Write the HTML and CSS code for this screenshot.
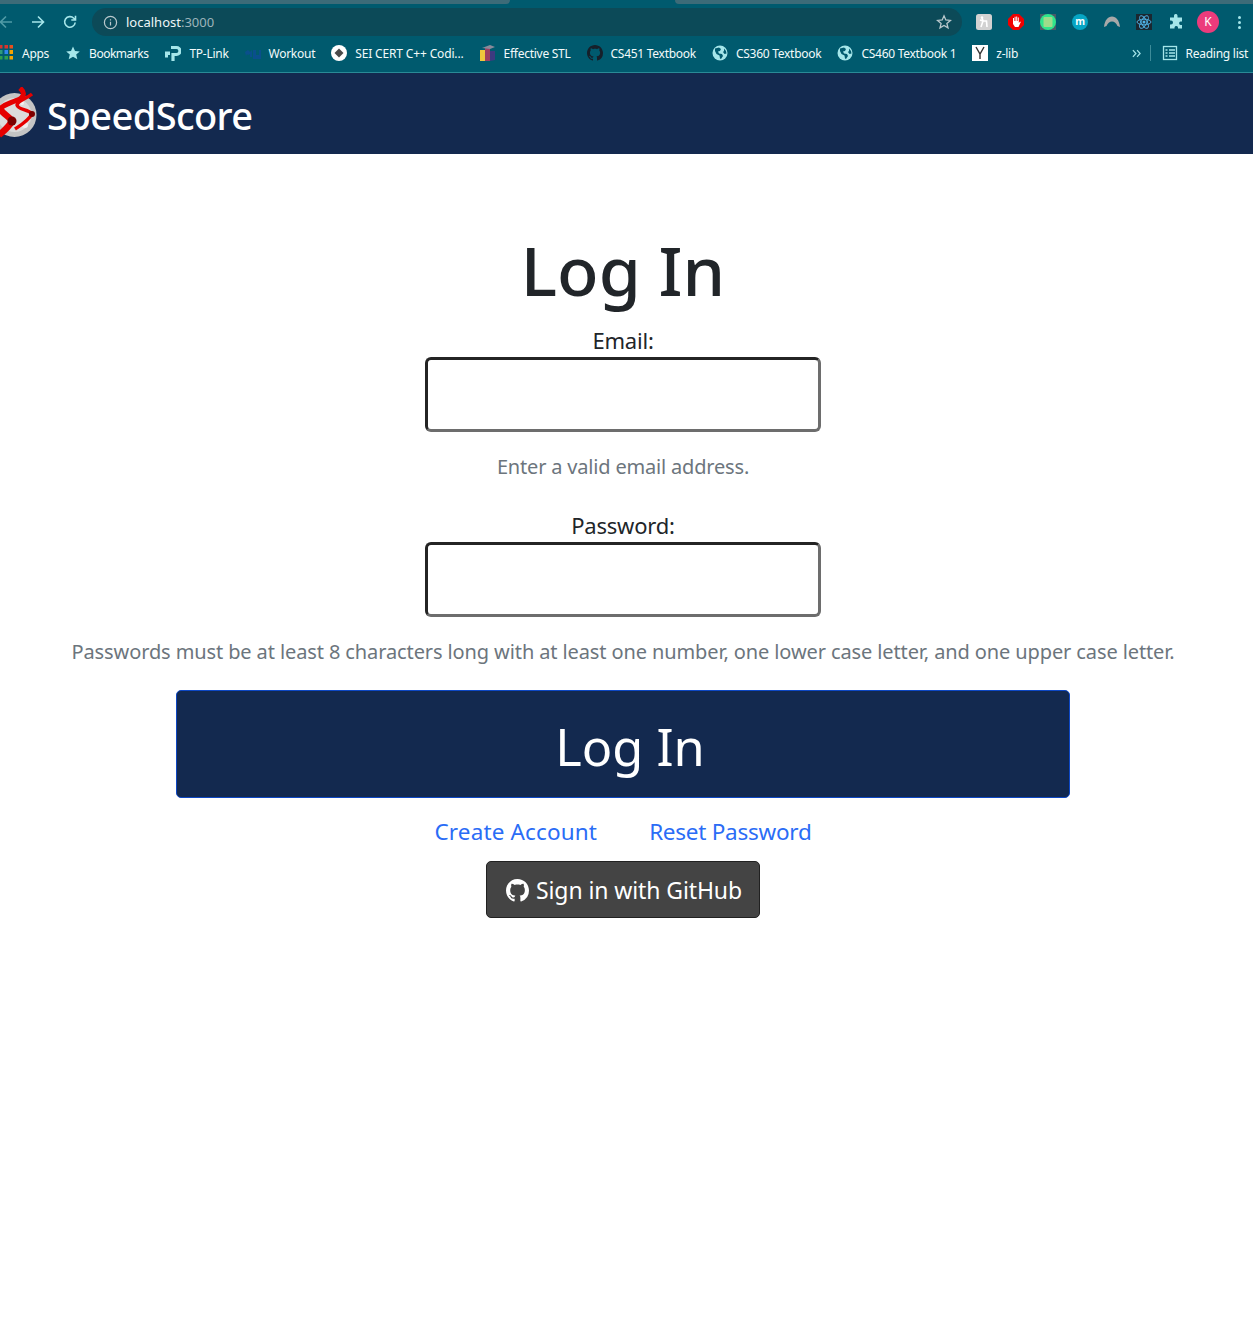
FILE: index.html
```html
<!DOCTYPE html>
<html lang="en">
<head>
  <meta charset="UTF-8">
  <title>SpeedScore</title>
  <link rel="stylesheet" href="styles.css">
</head>
<body>
<svg class="defs" width="0" height="0">
  <symbol id="octocat" viewBox="0 0 16 16">
    <path fill-rule="evenodd" d="M8 0C3.58 0 0 3.58 0 8c0 3.54 2.29 6.53 5.47 7.59.4.07.55-.17.55-.38 0-.19-.01-.82-.01-1.49-2.01.37-2.53-.49-2.69-.94-.09-.23-.48-.94-.82-1.13-.28-.15-.68-.52-.01-.53.63-.01 1.08.58 1.23.82.72 1.21 1.87.87 2.33.66.07-.52.28-.87.51-1.07-1.78-.2-3.64-.89-3.64-3.95 0-.87.31-1.59.82-2.15-.08-.2-.36-1.02.08-2.12 0 0 .67-.21 2.2.82.64-.18 1.32-.27 2-.27s1.36.09 2 .27c1.53-1.04 2.2-.82 2.2-.82.44 1.1.16 1.92.08 2.12.51.56.82 1.27.82 2.15 0 3.07-1.87 3.75-3.65 3.95.29.25.54.73.54 1.48 0 1.07-.01 1.93-.01 2.2 0 .21.15.46.55.38A8.01 8.01 0 0 0 16 8c0-4.42-3.58-8-8-8z"/>
  </symbol>
  <symbol id="globe" viewBox="0 0 16 16">
    <circle cx="8" cy="8" r="7.5" fill="#a5e6ea"/>
    <path fill="#005a6e" d="M3 3.5 7 2.5l2 1.5-1 2-2 .5 1 2 3 .5 1 2-2 3-1-.5-.5-3-3-1.500-1.500-3zM12 3.500l2 2.500.5 2.500-2 .5-1.500-2 1-1z"/>
  </symbol>
</svg>

<header class="browser">
  <div class="tabstrip">
    <div class="tab-left"></div>
    <div class="tab-right"></div>
  </div>
  <div class="toolbar">
    <svg class="nav-icon dim" viewBox="0 0 16 16"><path d="M14 8H2.500M8 2.500 2.500 8 8 13.500"/></svg>
    <svg class="nav-icon" viewBox="0 0 16 16"><path d="M2 8h11.500M8 2.500 13.500 8 8 13.500"/></svg>
    <svg class="nav-icon" viewBox="0 0 16 16"><path d="M13.200 8.500a5.300 5.300 0 1 1-1.400-4.200L13.500 6M13.500 1.800V6H9.300"/></svg>
    <div class="omnibox">
      <svg class="info" viewBox="0 0 16 16"><circle cx="8" cy="8" r="6.500"/><path d="M8 7.200v4M8 4.500v1.300"/></svg>
      <span class="host">localhost</span><span class="port">:3000</span>
      <svg class="star" viewBox="0 0 16 16"><path d="M8 1.800 9.800 6l4.600.4-3.500 3 1.100 4.500L8 11.500l-4 2.400 1.100-4.500-3.500-3L6.200 6z"/></svg>
    </div>
    <div class="extensions">
      <svg class="ext" viewBox="0 0 16 16"><rect width="16" height="16" rx="2.500" fill="#d2d2d2"/><path fill="none" stroke="#fff" stroke-width="1.600" d="M6 3.500 7 7l-2 6M7 7h3.500l.5 6M4 6l3 1"/><circle cx="6" cy="3.500" r="1.200" fill="#fff"/></svg>
      <svg class="ext" viewBox="0 0 16 16"><path fill="#f00000" d="M5 0h6l5 5v6l-5 5H5l-5-5V5z"/><path fill="#fff" d="M5 7V4h1v3h.6V2.800h1V7h.6V2.500h1V7h.6V3.500h1V9l1.200-1.500.8.500L10.500 13H7L5 10z"/></svg>
      <svg class="ext" viewBox="0 0 16 16"><rect width="16" height="16" fill="#4a5a68"/><circle cx="8" cy="8" r="8" fill="#2fe58c"/><rect x="3.500" y="3" width="9" height="10" rx="1" fill="#9fdc8a"/></svg>
      <svg class="ext" viewBox="0 0 16 16"><circle cx="8" cy="8" r="8" fill="#06a5c4"/><text x="8" y="11" class="ext-m">m</text></svg>
      <svg class="ext" viewBox="0 0 16 16"><path fill="#a8a8a8" d="M0 13C.8 6 4 2.500 8 2.500s7.200 3.500 8 10.500l-2.500-1C12.500 9.500 10.300 7.500 8 7.500S3.500 9.500 2.500 12z"/></svg>
      <svg class="ext" viewBox="0 0 16 16"><rect width="16" height="16" fill="#1b2730"/><g fill="none" stroke="#4fb3e8" stroke-width=".9"><ellipse cx="8" cy="8" rx="7" ry="2.800"/><ellipse cx="8" cy="8" rx="7" ry="2.800" transform="rotate(60 8 8)"/><ellipse cx="8" cy="8" rx="7" ry="2.800" transform="rotate(120 8 8)"/></g><circle cx="8" cy="8" r="1.500" fill="#4fb3e8"/></svg>
      <svg class="ext" viewBox="0 0 16 16"><path fill="#a5e6ea" d="M6 1.500a1.800 1.800 0 0 1 3.500 0V3.500H14V7.500h-1.500a1.800 1.800 0 0 0 0 3.500H14v3.500H10v-1a1.800 1.800 0 0 0-3.500 0v1H2V10.500h1a2 2 0 0 0 0-4H2V3.500h4z"/></svg>
      <span class="avatar">K</span>
      <span class="kebab"><i></i><i></i><i></i></span>
    </div>
  </div>
  <div class="bookmarks">
    <svg class="bm-icon apps" viewBox="0 0 16 16">
      <path fill="#d8342c" d="M0 0h2.500v3.500H0zM4.500 0H8v3.500H4.500z"/><path fill="#e8501c" d="M9.500 0H13v3.500H9.500z"/>
      <path fill="#2e9a7c" d="M0 5h2.500v4H0z"/><path fill="#2f86ee" d="M4.500 5H8v4H4.500z"/><path fill="#f4a400" d="M9.500 5H13v4H9.500z"/>
      <path fill="#2e9f50" d="M0 11h2.500v3.500H0zM4.500 11H8v3.500H4.500z"/><path fill="#f4a400" d="M9.500 11H13v3.500H9.500z"/>
    </svg>
    <span class="bm">Apps</span>
    <svg class="bm-icon" viewBox="0 0 16 16"><path fill="#a5e6ea" d="M8 1.500 10 6l4.800.4-3.600 3.200 1.100 4.700L8 11.800l-4.300 2.500 1.100-4.700L1.200 6.400 6 6z"/></svg>
    <span class="bm bm-tight">Bookmarks</span>
    <svg class="bm-icon" viewBox="0 0 16 16"><path fill="none" stroke="#a5e6ea" stroke-width="3.200" d="M6 2.500h5.500a3.500 3.500 0 0 1 0 7H8V16"/><path fill="#a5e6ea" d="M0 6.500h5V10H3v2.500H0z"/></svg>
    <span class="bm">TP-Link</span>
    <svg class="bm-icon" viewBox="0 0 16 16"><path fill="#0a4f8c" d="M0 7l3-2 2 2 2-2v7H5V9l-2 1-1-1-1 2zM8 5h3v5h3V5h2v9H8z"/></svg>
    <span class="bm">Workout</span>
    <svg class="bm-icon" viewBox="0 0 16 16"><circle cx="8" cy="8" r="8" fill="#fff"/><path fill="#4a4a4a" d="M8 3.500 12.500 8 8 12.500 3.500 8z"/></svg>
    <span class="bm bm-wide">SEI CERT C++ Codi...</span>
    <svg class="bm-icon" viewBox="0 0 16 16"><path fill="#f0c83c" d="M0 5h5v11H0z"/><path fill="#3d3a80" d="M10 6h5v9l-5 1z"/><path fill="#a04060" d="M5 3h5v13H5z"/><path fill="#8a8a9a" d="M2 3l8-3 5 2-5 2z"/></svg>
    <span class="bm">Effective STL</span>
    <svg class="bm-icon" viewBox="0 0 16 16" fill="#16202a"><use href="#octocat"/></svg>
    <span class="bm">CS451 Textbook</span>
    <svg class="bm-icon" viewBox="0 0 16 16"><use href="#globe"/></svg>
    <span class="bm">CS360 Textbook</span>
    <svg class="bm-icon" viewBox="0 0 16 16"><use href="#globe"/></svg>
    <span class="bm">CS460 Textbook 1</span>
    <svg class="bm-icon" viewBox="0 0 16 16"><rect width="16" height="16" fill="#fff"/><path fill="none" stroke="#333" stroke-width="1.400" d="M4 2l4 7 4-7M8 9v5"/></svg>
    <span class="bm">z-lib</span>
    <svg class="more" viewBox="0 0 8 8"><path d="M.8 1 3.500 4 .8 7M4.500 1 7.200 4 4.500 7"/></svg>
    <span class="sep"></span>
    <svg class="bm-icon" viewBox="0 0 16 16"><rect x="1.500" y="1.500" width="13" height="13" fill="none" stroke="#a5e6ea" stroke-width="1.300"/><path stroke="#a5e6ea" stroke-width="1.300" d="M3.500 5h2M7 5h6M3.500 8h2M7 8h6M3.500 11h2M7 11h6"/></svg>
    <span class="bm">Reading list</span>
  </div>
</header>

<nav class="navbar">
  <svg class="logo" viewBox="0 0 38 54">
    <circle cx="14.500" cy="28" r="22" fill="#c4c4c4"/>
    <circle cx="14.500" cy="28" r="17" fill="#dcdcdc"/>
    <circle cx="22" cy="16" r="2" fill="#f4f4f4"/>
    <circle cx="25" cy="38" r="3" fill="#f0f0f0"/>
    <g fill="none" stroke="#e60000">
      <path stroke-width="5" d="M20 1C27 7 22 12 15 14 8 17 3 18 0 22"/>
      <path stroke-width="6.500" d="M0 22C4 28 9 29 12 34 9 40 4 44-1 48"/>
      <path stroke-width="3.500" d="M32 7C26 12 18 13 17 18 18 23 28 22 32 27 28 34 21 38 15 42"/>
    </g>
    <circle cx="12" cy="34" r="4.500" fill="#7c0000"/>
    <circle cx="32" cy="27" r="3" fill="#7c0000"/>
  </svg>
  <span class="brand">SpeedScore</span>
</nav>

<main class="login">
  <h1 class="title">Log In</h1>
  <form class="login-form">
    <label class="field-label" for="email">Email:</label>
    <input class="field" id="email" type="text">
    <p class="hint hint-email">Enter a valid email address.</p>
    <label class="field-label" for="password">Password:</label>
    <input class="field" id="password" type="password">
    <p class="hint hint-password">Passwords must be at least 8 characters long with at least one number, one lower case letter, and one upper case letter.</p>
    <button class="submit" type="button">Log In</button>
  </form>
  <div class="links">
    <a class="link-create" href="#">Create Account</a>
    <a class="link-reset" href="#">Reset Password</a>
  </div>
  <button class="github" type="button">
    <svg class="github-icon" viewBox="0 0 16 16" fill="#fff"><use href="#octocat"/></svg>
    Sign in with GitHub
  </button>
</main>
</body>
</html>
```

FILE: styles.css
```css
body {
  margin: 0;
  background: #fff;
  color: #212529;
  font-family: "Noto Sans", "Open Sans", Arial, sans-serif;
  overflow-x: hidden;
}
.defs {
  display: block;
  height: 0;
}

/* browser chrome */
.browser {
  background: #005a6e;
  color: #fff;
  border-bottom: 1px solid #2a8a96;
}
.tabstrip {
  height: 8px;
  display: flex;
  justify-content: space-between;
}
.tab-left, .tab-right {
  height: 4px;
  background: #3d6b78;
}
.tab-left {
  width: 510px;
  border-radius: 0 0 6px 0;
}
.tab-right {
  width: 578px;
  border-radius: 0 0 0 6px;
}
.toolbar {
  height: 28px;
  display: flex;
  align-items: center;
  gap: 16px;
  margin-left: -2px;
}
.nav-icon {
  width: 16px;
  height: 16px;
  flex: none;
  fill: none;
  stroke: #a5e6ea;
  stroke-width: 1.600;
}
.nav-icon.dim {
  stroke: #4f9aa6;
}
.omnibox {
  width: 870px;
  height: 28px;
  margin-left: -2px;
  padding: 0 10px 0 11px;
  box-sizing: border-box;
  display: flex;
  align-items: center;
  border-radius: 14px;
  background: #0c4a58;
  font-size: 13px;
}
.info {
  width: 15px;
  height: 15px;
  margin-right: 8px;
  fill: none;
  stroke: #b9c8cc;
  stroke-width: 1.300;
}
.host {
  color: #eef6f7;
}
.port {
  color: #9db4ba;
}
.star {
  width: 16px;
  height: 16px;
  margin-left: auto;
  fill: none;
  stroke: #b9c8cc;
  stroke-width: 1.300;
}
.extensions {
  display: flex;
  align-items: center;
  gap: 16px;
  margin-left: -2px;
}
.ext {
  width: 16px;
  height: 16px;
  flex: none;
}
.ext-m {
  fill: #fff;
  font-size: 10px;
  font-weight: 700;
  text-anchor: middle;
}
.avatar {
  width: 22px;
  height: 22px;
  margin-left: -3px;
  flex: none;
  border-radius: 50%;
  background: #ec3b7c;
  font-size: 12px;
  line-height: 22px;
  text-align: center;
}
.kebab {
  display: flex;
  flex-direction: column;
  gap: 2px;
  margin-left: 3px;
}
.kebab i {
  width: 3px;
  height: 3px;
  border-radius: 50%;
  background: #a5e6ea;
}
.bookmarks {
  height: 34px;
  padding-bottom: 2px;
  display: flex;
  align-items: center;
  font-size: 12px;
  white-space: nowrap;
}
.bm-icon {
  width: 16px;
  height: 16px;
  flex: none;
  margin-right: 8px;
}
.apps {
  margin-right: 6px;
}
.bm {
  margin-right: 16px;
  color: #f2fafb;
  letter-spacing: -.27px;
}
.bm-tight {
  margin-right: 17px;
  letter-spacing: -.5px;
}
.bm-wide {
  letter-spacing: -.15px;
}
.more {
  width: 9px;
  height: 9px;
  margin-left: auto;
  fill: none;
  stroke: #a5e6ea;
  stroke-width: 1.100;
}
.sep {
  width: 1px;
  height: 16px;
  margin: 0 11px 0 9px;
  background: #3d8c99;
}
.bookmarks .bm:last-child {
  margin-right: 5px;
}

/* site navbar */
.navbar {
  height: 81px;
  display: flex;
  align-items: center;
  gap: 9px;
  background: #13294f;
}
.logo {
  width: 38px;
  height: 54px;
  flex: none;
}
.brand {
  margin-top: 2px;
  color: #fff;
  font-size: 38px;
  font-weight: 500;
  letter-spacing: -.6px;
}

/* login form */
.login {
  display: flex;
  flex-direction: column;
  align-items: center;
  margin-right: 7px;
  text-align: center;
}
.title {
  margin: 71px 0 10px;
  font-size: 68px;
  font-weight: 500;
  line-height: 90px;
}
.login-form {
  display: flex;
  flex-direction: column;
  align-items: center;
  width: 100%;
}
.field-label {
  padding-bottom: 2px;
  font-size: 22px;
  line-height: 30px;
  letter-spacing: -.2px;
}
.field {
  width: 396px;
  height: 75px;
  box-sizing: border-box;
  border: 3px solid;
  border-color: #242424 #6d6d6d #6d6d6d #242424;
  border-radius: 6px;
  background: #fff;
}
.hint {
  margin: 0;
  color: #6c757d;
  font-size: 20px;
  line-height: 30px;
}
.hint-email {
  margin-top: 20px;
  margin-bottom: 28px;
  letter-spacing: -.18px;
}
.hint-password {
  margin-top: 20px;
  letter-spacing: -.11px;
}
.submit {
  width: 894px;
  height: 108px;
  margin-top: 23px;
  padding: 4px 0 0 14px;
  border: 1px solid #0d47c4;
  border-radius: 5px;
  background: #13294f;
  color: #fff;
  font-family: inherit;
  font-size: 50.500px;
}
.links {
  display: flex;
  gap: 52px;
  margin-top: 18px;
}
.links a {
  color: #2a6cf6;
  font-size: 22.500px;
  line-height: 32px;
  text-decoration: none;
}
.link-create {
  letter-spacing: .15px;
}
.link-reset {
  letter-spacing: -.25px;
}
.github {
  display: flex;
  align-items: center;
  gap: 7px;
  width: 274px;
  height: 57px;
  margin-top: 13px;
  padding: 1px 0 0 19px;
  border: 1px solid #212121;
  border-radius: 5px;
  background: #444;
  color: #fff;
  font-family: inherit;
  font-size: 23px;
  letter-spacing: -.1px;
  white-space: nowrap;
}
.github-icon {
  width: 23px;
  height: 23px;
  flex: none;
}
```
